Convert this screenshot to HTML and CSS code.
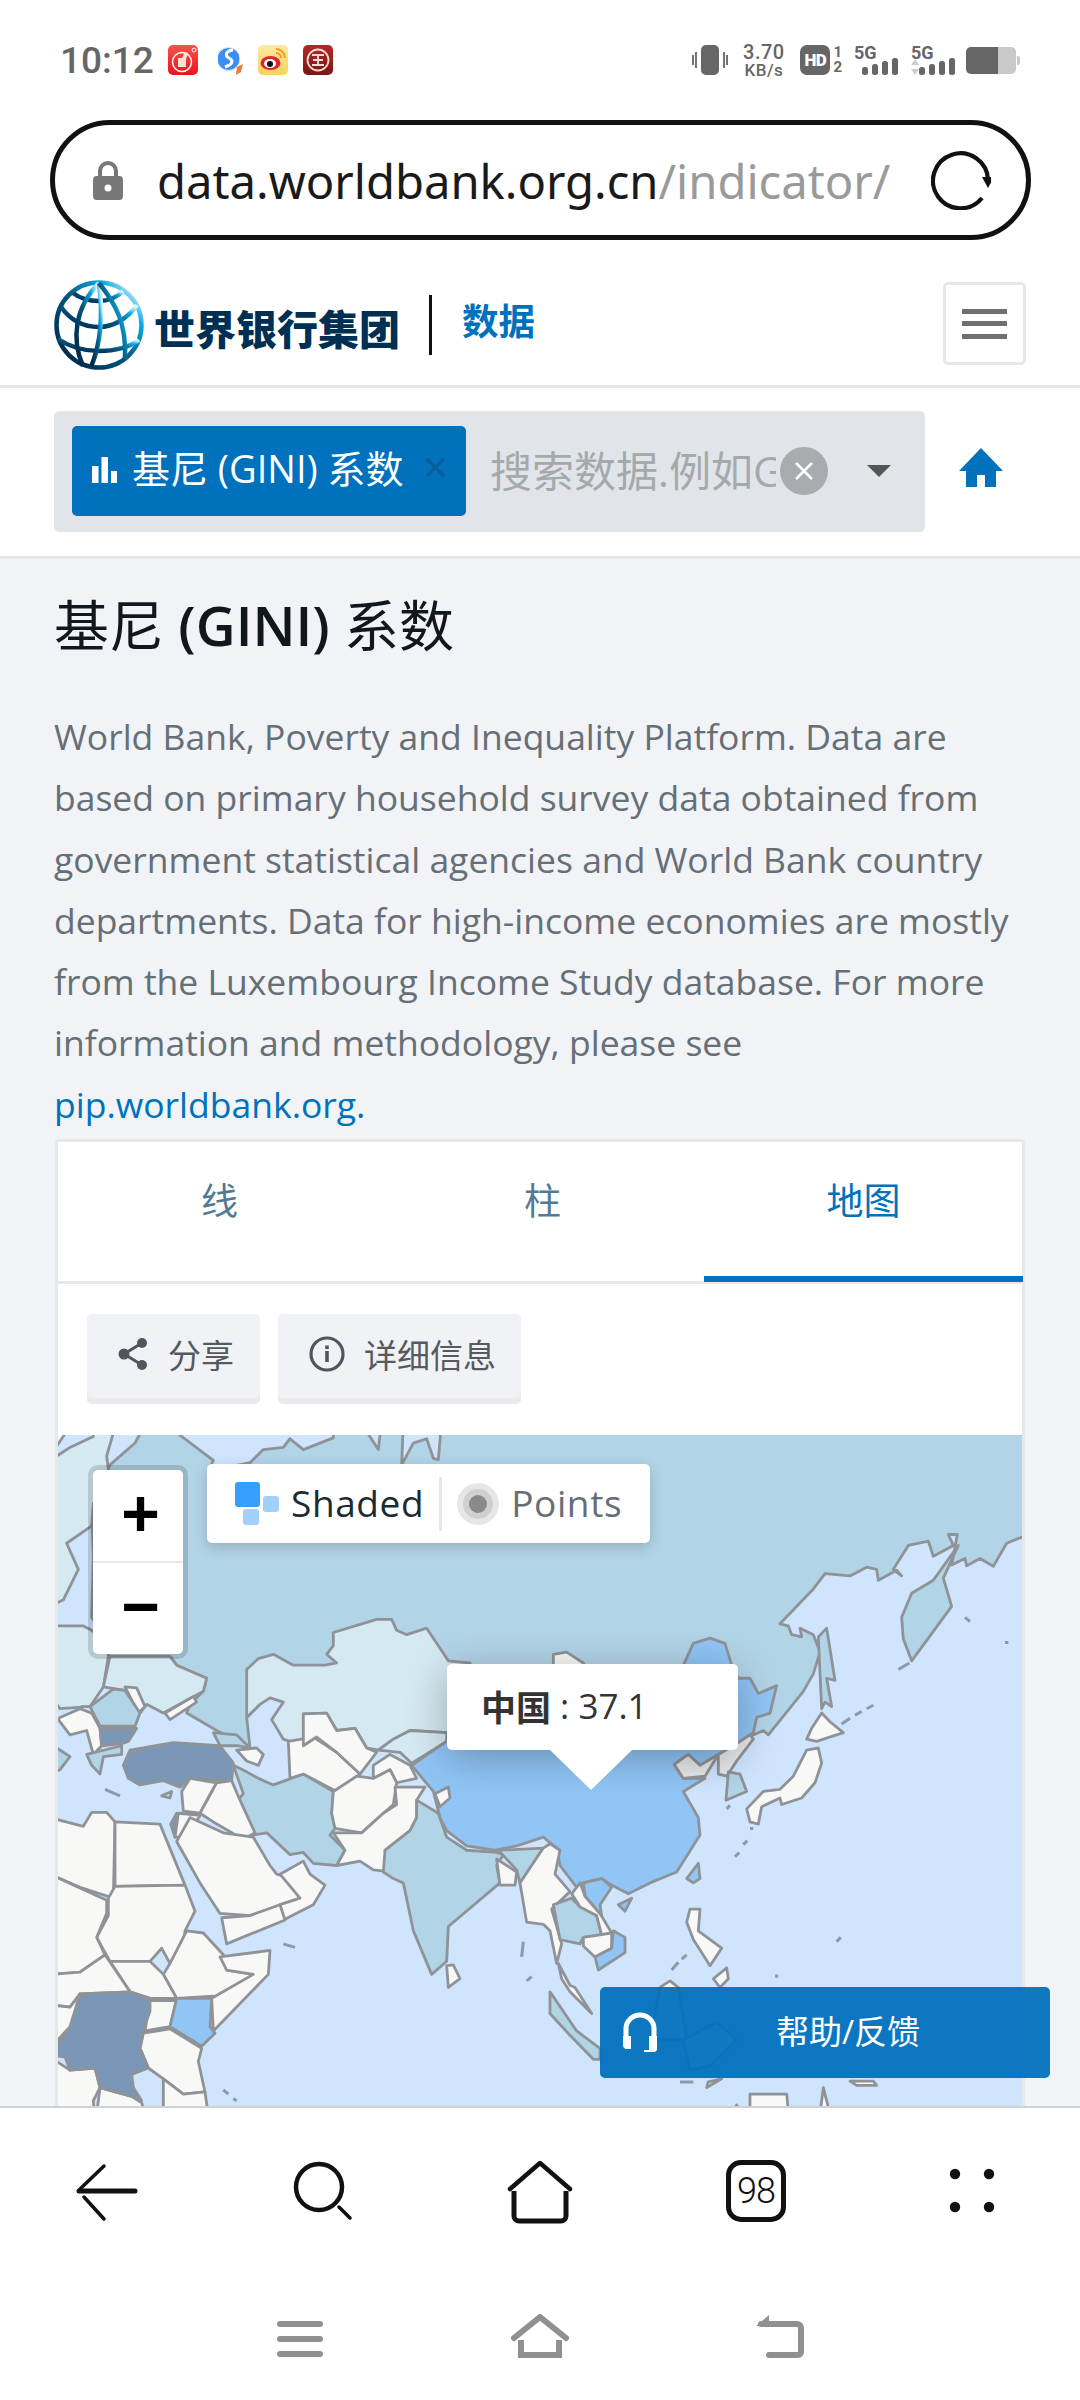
FILE: index.html
```html
<!DOCTYPE html>
<html lang="zh">
<head>
<meta charset="utf-8">
<title>基尼 (GINI) 系数</title>
<link rel="stylesheet" href="styles.css">
</head>
<body>
<div class="phone">
  <header class="status">
    <div class="status-left">
      <span class="time">10:12</span>
      <svg class="app" width="30" height="30" viewBox="0 0 30 30"><defs><linearGradient id="r1" x1="0" y1="0" x2="0" y2="1"><stop offset="0" stop-color="#f4554a"/><stop offset="1" stop-color="#f0101c"/></linearGradient></defs><rect width="30" height="30" rx="5" fill="url(#r1)"/><circle cx="14" cy="17" r="9.5" fill="none" stroke="#fff" stroke-width="1.5"/><path d="M10 13h4l3-6 3 1-2 6v8h-8z" fill="#fbe3d6"/><circle cx="26" cy="5" r="2" fill="none" stroke="#fff"/></svg>
      <svg class="app app-sogou" width="25" height="30" viewBox="0 0 25 30"><circle cx="10.500" cy="14" r="11.500" fill="#3a8ff0" stroke="#e3f0fc"/><path d="M15 5C7 6 7 11 11 13s5 6-4 9" fill="none" stroke="#fff" stroke-width="3"/><path d="M19 22l6-3-2 8-5 3z" fill="#ef7a3a"/></svg>
      <svg class="app" width="30" height="30" viewBox="0 0 30 30"><defs><linearGradient id="r2" x1="0" y1="0" x2="0" y2="1"><stop offset="0" stop-color="#fdeaa6"/><stop offset="1" stop-color="#fbd25c"/></linearGradient></defs><rect width="30" height="30" rx="5" fill="url(#r2)"/><ellipse cx="12.500" cy="18" rx="10" ry="7" fill="#e3262b"/><ellipse cx="12" cy="18.500" rx="6" ry="4.500" fill="#fff"/><circle cx="12" cy="19" r="3" fill="#111"/><path d="M18 4a9 9 0 0 1 9 9M18 8a5 5 0 0 1 5 5" fill="none" stroke="#f39a1c" stroke-width="2"/></svg>
      <svg class="app" width="30" height="30" viewBox="0 0 30 30"><defs><linearGradient id="r3" x1="0" y1="0" x2="0" y2="1"><stop offset="0" stop-color="#b32a26"/><stop offset="1" stop-color="#7d1512"/></linearGradient></defs><rect width="30" height="30" rx="5" fill="url(#r3)"/><circle cx="15" cy="15" r="10.500" fill="none" stroke="#f6dcd8" stroke-width="1.800"/><path d="M9 10h12M15 10v10M9 20h12M10 15h10" stroke="#f6dcd8" stroke-width="1.800" fill="none"/></svg>
    </div>
    <div class="status-right">
      <svg width="36" height="30" viewBox="0 0 36 30"><rect x="9" width="18" height="30" rx="5" fill="#666"/><path d="M1 10v10M4 7v16M32 7v16M35 10v10" stroke="#666" stroke-width="1.800"/></svg>
      <span class="speed"><b>3.70</b><b class="kbs">KB/s</b></span>
      <span class="hd"><span class="hd-box">HD</span><span class="hd-nums"><b>1</b><b>2</b></span></span>
      <span class="signal"><b class="five-g">5G</b><svg width="37" height="17" viewBox="0 0 37 17"><rect y="9" width="6" height="8" rx="2.500" fill="#666"/><rect x="10" y="6" width="6" height="11" rx="2.500" fill="#666"/><rect x="20" y="3" width="6" height="14" rx="2.500" fill="#666"/><rect x="30" width="6" height="17" rx="2.500" fill="#666"/></svg></span>
      <span class="signal"><b class="five-g">5G</b><svg width="37" height="17" viewBox="0 0 37 17"><rect y="9" width="6" height="8" rx="2.500" fill="#666"/><rect x="10" y="6" width="6" height="11" rx="2.500" fill="#666"/><rect x="20" y="3" width="6" height="14" rx="2.500" fill="#666"/><rect x="30" width="6" height="17" rx="2.500" fill="#666"/></svg><svg class="updown" width="8" height="16" viewBox="0 0 8 16"><path d="M4 0l4 6H0zM4 16l4-6H0z" fill="#ccc"/></svg></span>
      <svg class="battery" width="54" height="27" viewBox="0 0 54 27"><path d="M32 0h13a5 5 0 0 1 5 5v17a5 5 0 0 1-5 5H32z" fill="#c9c9c9"/><path d="M51 9h1a2 2 0 0 1 2 2v5a2 2 0 0 1-2 2h-1z" fill="#c9c9c9"/><path d="M5 0h27v27H5a5 5 0 0 1-5-5V5a5 5 0 0 1 5-5z" fill="#666"/></svg>
    </div>
  </header>

  <div class="urlbar">
    <svg class="lock" width="30" height="39" viewBox="0 0 30 39"><path d="M7 17v-7a8 8 0 0 1 16 0v7" fill="none" stroke="#777" stroke-width="4"/><rect y="15" width="30" height="24" rx="4" fill="#777"/><circle cx="15" cy="27" r="3.500" fill="#fff"/></svg>
    <span class="url"><span class="url-host">data.worldbank.org.cn</span><span class="url-path">/indicator/</span></span>
    <svg class="reload" width="60" height="60" viewBox="0 0 60 60"><path d="M51 48A27.500 27.500 0 1 1 57 30" fill="none" stroke="#111" stroke-width="4.200"/><path d="M51 27h12l-6 11z" fill="#111"/></svg>
  </div>

  <div class="site-head">
    <div class="brand">
      <svg class="globe" width="92" height="92" viewBox="0 0 92 92">
        <defs><linearGradient id="gl" x1="0.1" y1="0.9" x2="0.95" y2="0.1"><stop offset="0" stop-color="#002a4e"/><stop offset=".45" stop-color="#03567f"/><stop offset=".8" stop-color="#0aa8e0"/><stop offset="1" stop-color="#d8f2fb"/></linearGradient></defs>
        <g fill="none" stroke="url(#gl)" stroke-width="4.500">
          <circle cx="46" cy="46" r="42.500"/>
          <path d="M8 28c10 14 24 20 38 20s28-8 38-22"/>
          <path d="M5 60c12 8 26 12 41 12s29-3 40-11"/>
          <path d="M20 14c8 6 16 8 26 8s18-4 24-10"/>
          <path d="M46 4C22 28 18 60 30 87"/>
          <path d="M46 4c4 30 2 60-8 84"/>
          <path d="M46 4c16 20 28 40 26 76"/>
        </g>
      </svg>
      <span class="brand-name">世界银行集团</span>
      <span class="brand-sep"></span>
      <span class="brand-data">数据</span>
    </div>
    <button class="burger" type="button"><span></span><span></span><span></span></button>
  </div>

  <div class="search-row">
    <div class="searchbox">
      <div class="chip">
        <svg class="chip-icon" width="25" height="26" viewBox="0 0 25 26"><rect y="9" width="6.500" height="17" fill="#fff"/><rect x="9.500" width="6.500" height="26" fill="#fff"/><rect x="19" y="14" width="6" height="12" fill="#fff"/></svg>
        <span class="chip-text">基尼 (GINI) 系数</span>
        <span class="chip-x">×</span>
      </div>
      <span class="placeholder">搜索数据.例如GDP</span>
      <span class="clear"><svg width="20" height="20" viewBox="0 0 20 20"><path d="M2 2l16 16M18 2L2 18" stroke="#fff" stroke-width="2.500"/></svg></span>
      <span class="caret"></span>
    </div>
    <svg class="home" width="44" height="39" viewBox="0 0 44 39"><path d="M22 0l22 23h-7v16H26V27h-8v12H7V23H0z" fill="#0071bc"/></svg>
  </div>

  <main class="content">
    <h1 class="title">基尼 <span class="title-latin">(GINI)</span> 系数</h1>
    <p class="desc">World Bank, Poverty and Inequality Platform. Data are based on primary household survey data obtained from government statistical agencies and World Bank country departments. Data for high-income economies are mostly from the Luxembourg Income Study database. For more information and methodology, please see <a class="link" href="#">pip.worldbank.org.</a></p>

    <section class="card">
      <nav class="tabs">
        <span class="tab">线</span>
        <span class="tab">柱</span>
        <span class="tab tab-active">地图</span>
      </nav>
      <div class="tools">
        <button class="tool tool-share" type="button"><svg width="30" height="32" viewBox="0 0 30 32"><path d="M24 5L6 16l18 11" fill="none" stroke="#50565b" stroke-width="3"/><circle cx="24" cy="5" r="5" fill="#50565b"/><circle cx="6" cy="16" r="5.500" fill="#50565b"/><circle cx="24" cy="27" r="5" fill="#50565b"/></svg><span>分享</span></button>
        <button class="tool tool-info" type="button"><svg width="36" height="36" viewBox="0 0 36 36"><circle cx="18" cy="18" r="16" fill="none" stroke="#50565b" stroke-width="3.200"/><rect x="16.200" y="15" width="3.600" height="11" fill="#50565b"/><rect x="16.200" y="9.500" width="3.600" height="3.600" fill="#50565b"/></svg><span>详细信息</span></button>
      </div>
      <div class="map">
        <svg class="map-svg" viewBox="58 1435 965 700" preserveAspectRatio="none">
          <g transform="translate(50 1430) scale(.33333 .4355)">
            <polygon class="ru" points="255,30 290,-20 390,-20 390,12 490,70 475,95 600,75 640,45 700,40 720,20 760,45 850,18 850,-20 930,-20 985,45 995,-20 1060,-20 1055,80 1090,30 1130,20 1150,65 1165,68 1175,-20 3000,-20 3000,220 2918,245 2870,260 2830,313 2790,295 2750,312 2745,295 2705,310 2722,240 2695,240 2710,265 2650,290 2635,255 2575,265 2530,320 2555,335 2540,322 2485,345 2480,320 2450,315 2400,335 2325,330 2290,365 2190,445 2215,450 2225,470 2255,475 2250,455 2290,470 2310,510 2290,560 2260,600 2155,700 2140,690 2105,702 1600,700 700,620 590,585 630,630 590,660 600,730 500,690 410,650 420,630 460,600 470,570 380,540 360,520 175,520 175,490 125,430 130,290 125,180 180,80"/>
            <polygon class="lt" points="0,70 60,40 130,15 130,-20 200,-20 170,60 175,90 130,170 125,220 50,260 85,320 40,390 0,405"/>
            <polygon class="wh" points="0,-20 70,-20 0,60"/>
            <polygon class="lt" points="0,450 100,450 125,460 175,490 175,520 160,590 120,635 30,640 0,610"/>
            <polygon class="lt" points="160,590 180,520 360,520 380,540 470,570 460,600 400,625 340,650 290,630 270,650 225,598"/>
            <polygon class="wh" points="345,650 430,612 440,625 360,665"/>
            <polygon class="wh" points="225,590 260,592 285,635 265,650"/>
            <polygon class="ru" points="120,635 190,595 225,598 270,650 255,680 150,680 125,655"/>
            <polygon class="lt" points="95,635 120,635 150,680 115,695 95,665"/>
            <polygon class="wh" points="30,660 90,640 125,650 150,685 155,725 130,745 110,690 60,700 25,665"/>
            <polygon class="dk" points="150,685 260,685 235,715 215,720 155,725"/>
            <polygon class="ru" points="110,745 215,725 215,745 160,750 150,790 125,770"/>
            <polygon class="ru" points="0,720 60,750 30,780 0,790"/>
            <polygon class="dk" points="220,770 240,735 370,718 510,725 550,765 545,805 420,800 390,820 340,805 270,815 235,800"/>
            <polygon class="ru" points="490,695 560,700 600,730 560,725 510,725"/>
            <polygon class="wh" points="560,735 620,730 640,745 625,770 590,760"/>
            <polygon class="lt" points="590,660 590,550 625,525 670,515 730,540 825,540 860,535 830,515 850,495 850,465 980,435 1025,435 1040,460 1070,470 1130,455 1195,530 1260,535 1300,700 1185,695 1080,690 1030,710 985,735 950,730 915,685 860,690 830,650 760,652 760,725 700,710 665,665 700,625 660,615 630,630"/>
            <polygon class="lt" points="985,735 1030,710 1080,690 1190,695 1190,715 1085,765 1050,740"/>
            <polygon class="ru" points="550,770 590,785 625,800 670,815 760,790 850,830 845,880 855,915 840,930 885,965 860,1000 790,995 760,970 720,975 650,925 610,930 565,850 580,835"/>
            <polygon class="wh" points="715,715 790,705 860,740 930,790 860,830 760,790 720,800"/>
            <polygon class="wh" points="760,652 830,650 860,690 915,685 950,730 980,740 930,790 860,740 800,705 760,725"/>
            <polygon class="wh" points="970,770 1020,745 1080,770 1100,800 1040,810 1020,780 970,800"/>
            <polygon class="wh" points="850,830 920,795 970,800 1020,780 1040,810 1030,860 1000,880 935,925 855,915 845,880"/>
            <polygon class="wh" points="850,925 935,925 1000,880 1040,860 1035,820 1125,820 1100,850 1100,890 1080,920 1005,965 1030,1015 970,1010 930,990 860,1000 885,965"/>
            <polygon class="wh" points="395,830 400,875 450,880 500,810 420,800"/>
            <polygon class="wh" points="450,880 500,810 545,805 570,850 615,925 580,940 490,900"/>
            <polygon class="dk" points="362,905 380,880 375,935"/>
            <polygon class="wh" points="385,880 450,885 410,935 375,935"/>
            <polygon class="wh" points="380,945 420,890 520,925 610,935 660,1000 680,1020 745,1035 750,1075 600,1115 510,1110 450,1040"/>
            <polygon class="wh" points="690,1020 760,990 780,1020 825,1045 790,1090 700,1125 690,1090 750,1075"/>
            <polygon class="wh" points="515,1120 600,1115 690,1090 705,1125 530,1180"/>
            <polygon class="wh" points="0,890 100,910 125,878 170,878 195,900 190,1075 90,1050 0,1020"/>
            <polygon class="wh" points="195,900 330,905 405,1045 195,1048"/>
            <polygon class="wh" points="195,1048 405,1045 435,1105 405,1150 400,1185 360,1225 335,1190 300,1220 180,1220 140,1165 175,1115 175,1075"/>
            <polygon class="wh" points="0,1020 170,1080 170,1110 140,1165 165,1205 90,1245 0,1250"/>
            <polygon class="wh" points="360,1225 410,1150 460,1155 520,1205 530,1240 610,1250 500,1305 490,1300 380,1305 340,1250"/>
            <polygon class="wh" points="180,1220 300,1220 340,1250 380,1305 300,1305 240,1290"/>
            <polygon class="wh" points="510,1210 660,1195 655,1250 490,1380 485,1305 610,1250 530,1240"/>
            <polygon class="wh" points="0,1250 90,1245 165,1205 240,1290 90,1295 60,1325 0,1320"/>
            <polygon class="wh" points="0,1440 60,1470 135,1465 150,1510 130,1540 135,1600 0,1600"/>
            <polygon class="wh" points="150,1510 245,1530 275,1545 300,1600 135,1600"/>
            <polygon class="wh" points="280,1385 360,1375 455,1420 445,1450 465,1520 400,1525 340,1490 295,1465 270,1420"/>
            <polygon class="wh" points="340,1490 400,1525 465,1520 480,1600 340,1600"/>
            <polygon class="wh" points="300,1310 380,1310 360,1370 285,1380"/>
            <polygon class="md" points="380,1305 485,1305 480,1370 495,1385 455,1415 360,1370"/>
            <polygon class="dk" points="90,1295 240,1290 300,1305 300,1335 285,1365 270,1420 295,1465 245,1480 250,1510 275,1540 245,1530 150,1510 135,1465 60,1470 45,1440 0,1435 60,1370"/>
            <polygon class="wh" points="0,1320 60,1325 90,1295 60,1370 0,1420"/>
            <polygon class="ru" points="1100,850 1165,880 1190,935 1250,965 1340,970 1360,975 1340,1000 1350,1040 1195,1140 1190,1220 1145,1250 1090,1150 1060,1040 1030,1030 1000,1015 1005,965 1080,920 1100,890"/>
            <polygon class="wh" points="1190,1230 1210,1228 1230,1260 1195,1280"/>
            <polygon class="wh" points="1340,985 1400,1015 1395,1045 1350,1045"/>
            <polygon class="ru" points="1345,965 1480,960 1410,1040 1400,1010"/>
            <polygon class="wh" points="1510,540 1510,515 1550,510 1600,535 1620,560"/>
            <polygon class="md" points="1085,770 1190,715 1500,640 1900,540 1930,490 1980,478 2025,490 2045,540 2065,570 2100,570 2125,605 2180,587 2160,650 2120,660 2110,695 2060,720 2005,745 1950,770 1915,745 1873,768 1900,800 1965,800 1900,830 1945,890 1950,930 1880,1015 1800,1040 1735,1065 1685,1045 1655,1030 1600,1040 1580,1050 1530,1000 1520,960 1480,935 1400,955 1335,965 1250,955 1190,920 1170,890 1150,830"/>
            <polygon class="wh" points="1155,835 1195,820 1200,845 1170,865"/>
            <polygon class="gr" points="1873,768 1915,745 1950,770 2005,745 1965,795 1900,800"/>
            <polygon class="gr" points="2005,745 2060,720 2100,700 2110,710 2060,760 2030,795 2005,790"/>
            <polygon class="ru" points="2035,785 2070,790 2090,830 2028,850"/>
            <polygon class="wh" points="1410,1040 1480,960 1500,950 1530,965 1515,1020 1560,1060 1505,1100 1535,1180 1520,1225 1500,1150 1480,1135 1430,1130"/>
            <polygon class="ru" points="1510,1090 1565,1075 1590,1095 1640,1115 1655,1160 1600,1165 1590,1180 1530,1170 1520,1130"/>
            <polygon class="wh" points="1565,1065 1590,1040 1605,1070 1650,1110 1685,1155 1655,1160 1640,1115 1590,1095"/>
            <polygon class="md" points="1600,1040 1655,1030 1685,1050 1650,1090 1655,1115 1605,1070"/>
            <polygon class="wh" points="1600,1165 1685,1155 1685,1190 1635,1210 1600,1185"/>
            <polygon class="md" points="1690,1150 1725,1165 1725,1200 1645,1240 1635,1210 1685,1190"/>
            <polygon class="md" points="1705,1090 1745,1075 1725,1105"/>
            <polygon class="md" points="1910,1030 1945,995 1950,1030 1930,1040"/>
            <polygon class="wh" points="1525,1225 1560,1275 1575,1280 1625,1340 1560,1290 1535,1260"/>
            <polygon class="ru" points="1500,1290 1580,1380 1650,1420 1650,1445 1630,1445 1560,1390 1500,1340"/>
            <polygon class="wh" points="2090,870 2140,830 2190,825 2230,795 2270,735 2305,730 2315,765 2295,810 2255,845 2195,860 2190,845 2135,865 2125,905 2100,900"/>
            <polygon class="wh" points="2270,710 2285,685 2315,650 2340,670 2380,695 2300,715"/>
            <polygon class="ru" points="2305,475 2330,455 2355,575 2330,570 2345,635 2325,625 2315,640"/>
            <polygon class="ru" points="2555,430 2585,375 2650,345 2725,265 2680,340 2705,405 2585,530 2560,480"/>
            <polygon class="wh" points="1910,1130 1920,1100 1950,1100 1945,1150 2015,1190 1980,1230 1955,1200 1930,1170"/>
            <polygon class="wh" points="1990,1260 2030,1235 2035,1260 2010,1280"/>
            <polygon class="wh" points="1830,1280 1860,1265 1885,1280 1910,1400 1800,1400"/>
            <polygon class="wh" points="1900,1400 2000,1360 2060,1400 1980,1460 1920,1470"/>
            <polygon class="wh" points="2100,1558 2100,1525 2210,1525 2220,1600 2080,1600"/>
            <polygon class="wh" points="2305,1600 2320,1510 2350,1600"/>
            <polygon class="wh" points="2020,1600 2060,1550 2100,1600"/>
            <polygon class="ru" points="1970,1510 1975,1497 2015,1490"/>
            <polygon class="wh" points="2400,1495 2470,1495 2480,1505 2420,1505"/>
            <path class="dash" d="M2375,675L2400,662M2415,655L2435,646M2450,640L2470,632M2545,550L2578,535M2030,870L2040,862M2100,915L2110,915M2055,980L2068,970M2080,952L2092,943M1865,1240L1885,1222M1895,1215L1910,1205M2360,1175L2372,1165M2180,1250L2180,1258M2745,430L2760,440M2865,488L2875,488M520,1515L535,1525M550,1535L560,1540M700,1180L735,1188M165,825L210,840M1420,1175L1415,1210M1430,1265L1445,1255M1890,1497L1930,1497"/>
            <polygon class="sm" points="335,840 365,830 360,845"/>
          </g>
        </svg>

        <div class="zoom-ctl">
          <span class="zoom-btn zoom-plus">+</span>
          <span class="zoom-btn zoom-minus">−</span>
        </div>

        <div class="legend">
          <span class="legend-item">
            <svg width="44" height="44" viewBox="0 0 44 44"><rect width="25" height="25" rx="3" fill="#369ffb"/><rect x="28" y="14" width="16" height="16" rx="3" fill="#a1d0fb"/><rect x="8" y="27" width="16" height="16" rx="3" fill="#a1d0fb"/></svg>
            <span class="legend-on">Shaded</span>
          </span>
          <span class="legend-sep"></span>
          <span class="legend-item">
            <svg width="42" height="42" viewBox="0 0 42 42"><circle cx="21" cy="21" r="21" fill="#e6e6e6"/><circle cx="21" cy="21" r="15" fill="#d0d0d0"/><circle cx="21" cy="21" r="9" fill="#8a8a8a"/></svg>
            <span class="legend-off">Points</span>
          </span>
        </div>

        <div class="tip"><b>中国</b><span> : 37.1</span></div>
      </div>
    </section>
  </main>

  <a class="help" href="#">
    <svg width="34" height="42" viewBox="0 0 34 42"><path d="M3 26v-9a14 14 0 0 1 28 0v9" fill="none" stroke="#fff" stroke-width="5"/><path d="M0 24h8v13H4a4 4 0 0 1-4-4zM26 24h8v14l-2 2h-11v-2h10V38h-5z" fill="#fff"/></svg>
    <span>帮助/反馈</span>
  </a>

  <footer class="bottom">
    <div class="browser-nav">
      <svg width="64" height="64" viewBox="0 0 64 64"><path d="M3 31h56" stroke="#111" stroke-width="5" stroke-linecap="round"/><path d="M4 29L28 6M8 37l20 22" stroke="#111" stroke-width="3.500" stroke-linecap="round" fill="none"/></svg>
      <svg width="64" height="64" viewBox="0 0 64 64"><circle cx="27" cy="27" r="23" fill="none" stroke="#111" stroke-width="4.500"/><path d="M47 47l11 11" stroke="#111" stroke-width="3.500" stroke-linecap="round"/></svg>
      <svg width="66" height="64" viewBox="0 0 66 64"><path d="M3 29L33 3l30 26" fill="none" stroke="#111" stroke-width="4.500" stroke-linecap="round" stroke-linejoin="round"/><path d="M7 31v25a5 5 0 0 0 5 5h42a5 5 0 0 0 5-5V31" fill="none" stroke="#111" stroke-width="5"/></svg>
      <span class="tab-count">98</span>
      <svg width="64" height="64" viewBox="0 0 64 64"><circle cx="15" cy="14" r="5.200" fill="#111"/><circle cx="49" cy="14" r="5.200" fill="#111"/><circle cx="15" cy="47" r="5.200" fill="#111"/><circle cx="49" cy="47" r="5.200" fill="#111"/></svg>
    </div>
    <div class="system-nav">
      <svg width="46" height="44" viewBox="0 0 46 44"><path d="M3 10h40M3 25h40M3 40h40" stroke="#909090" stroke-width="6" stroke-linecap="round"/></svg>
      <svg width="58" height="44" viewBox="0 0 58 44"><path d="M3 24L29 3l26 21" fill="none" stroke="#909090" stroke-width="6" stroke-linecap="round" stroke-linejoin="round"/><path d="M10 26v15h38V26" fill="none" stroke="#909090" stroke-width="6"/></svg>
      <svg width="50" height="44" viewBox="0 0 50 44"><path d="M6 10h36a4 4 0 0 1 4 4v24a3 3 0 0 1-3 3H14" fill="none" stroke="#909090" stroke-width="6" stroke-linecap="round"/><path d="M14 1L1 12h13z" fill="#909090"/></svg>
    </div>
  </footer>
</div>
</body>
</html>
```
FILE: styles.css
```css
* { box-sizing: border-box; }
html, body { margin: 0; padding: 0; }
body { width: 1080px; height: 2400px; overflow: hidden; background: #fff; font-family: "Open Sans", "Noto Sans CJK SC", sans-serif; }
.phone { position: relative; width: 1080px; height: 2400px; display: flex; flex-direction: column; background: #fff; overflow: hidden; }
svg { display: block; flex: none; }
b { font-weight: 700; }

/* status bar */
.status { height: 120px; flex: none; display: flex; justify-content: space-between; align-items: center; padding: 0 60px; }
.status-left { display: flex; align-items: center; }
.time { font: 500 37px/1 Roboto, sans-serif; color: #666; width: 108px; }
.app { margin-right: 15px; }
.app-sogou { margin-left: 5px; }
.status-right { display: flex; align-items: center; color: #666; }
.speed { display: flex; flex-direction: column; align-items: center; margin: 0 14px 0 13px; width: 45px; font-family: Roboto, sans-serif; line-height: 1; }
.speed b { font-size: 20px; font-weight: 500; letter-spacing: .5px; }
.speed .kbs { font-size: 17px; }
.hd { display: flex; align-items: center; margin-right: 12px; }
.hd-box { width: 30px; height: 30px; border-radius: 7px; background: #666; color: #fff; font: 900 17px/30px Roboto, sans-serif; text-align: center; letter-spacing: -.5px; }
.hd-nums { display: flex; flex-direction: column; margin-left: 3px; font: 700 15px/15px Roboto, sans-serif; }
.signal { position: relative; display: block; width: 45px; height: 30px; margin-right: 12px; }
.five-g { position: absolute; left: 0; top: 0; font: 700 18px/16px Roboto, sans-serif; }
.signal svg { position: absolute; right: 0; bottom: 0; }
.signal .updown { left: 0; right: auto; }
.battery { margin-left: -2px; }

/* url bar */
.urlbar { height: 120px; flex: none; margin: 0 49px 0 50px; border: 5px solid #111; border-radius: 60px; display: flex; align-items: center; padding-left: 38px; }
.lock { margin-right: 34px; }
.url { width: 733px; white-space: nowrap; font: 400 47.200px/70px "Noto Sans", sans-serif; margin-top: 2px; }
.url-host { color: #1a1a1a; }
.url-path { color: #9a9a9a; }
.reload { margin-left: 41px; }

/* site header */
.site-head { height: 148px; flex: none; display: flex; align-items: center; justify-content: space-between; padding: 24px 54px 0 53px; border-bottom: 3px solid #e5e8eb; }
.brand { display: flex; align-items: center; }
.brand-name { margin-left: 9px; font: 900 41px/1 "Noto Sans CJK SC", sans-serif; color: #002f54; padding-top: 6px; }
.brand-sep { width: 3px; height: 60px; margin: 0 30px 0 29px; background: #111; }
.brand-data { font: 700 36.500px/1 "Noto Sans CJK SC", sans-serif; color: #0071bc; margin-top: -8px; }
.burger { width: 83px; height: 83px; padding: 0; background: #fff; border: 3px solid #e5e8eb; border-radius: 5px; display: flex; flex-direction: column; align-items: center; justify-content: center; gap: 7.500px; margin-top: -2px; }
.burger span { width: 45px; height: 5px; background: #707070; }

/* search row */
.search-row { height: 171px; flex: none; display: flex; align-items: center; padding-left: 54px; border-bottom: 3px solid #e5e8eb; }
.searchbox { width: 871px; height: 121px; background: #e1e5ea; border-radius: 5px; display: flex; align-items: center; padding: 0 0 0 18px; margin: -2px 34px 0 0; }
.chip { width: 394px; height: 90px; background: #0071bc; border-radius: 5px; display: flex; align-items: center; padding-left: 20px; flex: none; position: relative; }
.chip-icon { margin-right: 15px; margin-top: -3px; }
.chip-text { font-size: 38px; line-height: 50px; color: #fff; white-space: nowrap; margin-top: -7px; }
.chip-x { position: absolute; left: 351px; top: 15px; font-size: 44px; line-height: 50px; color: #0b5c98; }
.placeholder { width: 286px; margin: -6px 0 0 24px; overflow: hidden; white-space: nowrap; font-size: 42px; color: #a6a9ac; flex: none; }
.clear { width: 48px; height: 48px; flex: none; margin-left: 4px; border-radius: 50%; background: #a9abae; display: flex; align-items: center; justify-content: center; }
.caret { margin-left: 39px; width: 0; height: 0; border: 12px solid transparent; border-top-color: #555; border-bottom: 0; }
.home { margin-top: -10px; }

/* content */
.content { flex: 1; min-height: 0; overflow: hidden; background: #f1f3f7; padding: 0 55px; }
.title { margin: 31px 0 46px -1px; font-weight: 400; font-size: 55px; line-height: 70px; color: #11171c; }
.title-latin { font-weight: 600; }
.desc { margin: 0 0 0 -1px; font-size: 35.500px; line-height: 61.300px; color: #666f76; white-space: normal; width: 975px; }
.link { color: #0071bc; text-decoration: none; }
.card { margin-top: 4px; width: 970px; background: #fff; border: 3px solid #e5e8eb; border-bottom: 0; border-radius: 4px 4px 0 0; }
.tabs { height: 142px; display: flex; border-bottom: 3px solid #e6e8eb; }
.tab { width: 323px; flex: none; height: 140px; padding-top: 34px; border-bottom: 6px solid transparent; text-align: center; font-size: 37px; line-height: 50px; color: #527a93; }
.tab-active { width: 319px; color: #0071bc; border-bottom-color: #0071bc; }
.tools { height: 151px; display: flex; gap: 18px; padding: 30px 0 0 29px; }
.tool { height: 90px; padding: 0 0 10px 31px; display: flex; align-items: center; background: #f1f2f5; border: 0; border-radius: 5px; box-shadow: inset 0 -6px 0 #e9eaed; font-family: inherit; font-size: 33px; color: #555a5f; }
.tool-share { width: 173px; gap: 20px; }
.tool-info { width: 243px; gap: 19px; }

/* map */
.map { position: relative; height: 700px; overflow: hidden; background: #cfe4fd; }
.map-svg { position: absolute; left: 0; top: 0; width: 965px; height: 700px; }
.map-svg polygon { vector-effect: non-scaling-stroke; stroke: #8f9397; stroke-width: 2.800; stroke-linejoin: round; }
.ru { fill: #b2d4e7; }
.lt { fill: #d5e9f2; }
.wh { fill: #f8f8f7; }
.gr { fill: #e6e8ea; }
.dk { fill: #7b97b8; }
.md { fill: #90c5f6; }
.sm { fill: #cfe4fd; }
.dash { fill: none; stroke: #8b9aa8; stroke-width: 3; vector-effect: non-scaling-stroke; }
.zoom-ctl { position: absolute; left: 35px; top: 35px; width: 90px; height: 184px; display: flex; flex-direction: column; background: #fff; border-radius: 5px; box-shadow: 0 0 0 5px rgba(0,0,0,.14); }
.zoom-btn { flex: 1; display: flex; align-items: center; justify-content: center; font: 700 66px/1 "Liberation Sans", sans-serif; color: #000; padding: 0 0 6px 5px; }
.zoom-plus { border-bottom: 2px solid #e5e8eb; }
.legend { position: absolute; left: 149px; top: 29px; width: 443px; height: 79px; display: flex; align-items: center; padding-left: 28px; background: #fff; border-radius: 5px; box-shadow: 0 4px 14px rgba(0,0,0,.18); font-size: 37px; }
.legend-item { display: flex; align-items: center; gap: 12px; }
.legend-on { color: #1c2a33; letter-spacing: .6px; margin-top: -3px; }
.legend-off { color: #666e74; letter-spacing: .6px; margin-top: -3px; }
.legend-sep { width: 3px; height: 54px; margin: 0 15px; background: #e6e8ea; }
.tip { position: absolute; left: 389px; top: 229px; width: 291px; height: 86px; display: flex; align-items: center; padding: 0 0 4px 34px; background: #fff; border-radius: 5px; box-shadow: 0 8px 40px rgba(0,0,0,.28); font-size: 35px; color: #333; white-space: pre; }
.tip::after { content: ""; position: absolute; left: 103px; top: 86px; width: 0; height: 0; border-style: solid; border-width: 40px 41px 0; border-color: #fff transparent transparent; }

/* help */
.help { position: absolute; left: 600px; top: 1987px; width: 450px; height: 91px; display: flex; align-items: center; padding-left: 23px; background: rgba(0,112,188,.94); border-radius: 5px; text-decoration: none; color: #fff; font-size: 33px; }
.help span { margin: -6px 0 0 119px; }

/* bottom */
.bottom { flex: none; height: 294px; background: #fff; border-top: 2px solid #cfd2d5; padding-top: 52px; }
.browser-nav { display: grid; grid-template-columns: repeat(5, 216px); justify-items: center; }
.tab-count { width: 60px; height: 62px; border: 5px solid #111; border-radius: 15px; display: flex; align-items: center; justify-content: center; font: 300 36px/1 Roboto, sans-serif; color: #111; letter-spacing: -1px; }
.system-nav { display: grid; grid-template-columns: repeat(3, 240px); justify-items: center; padding: 0 180px; margin-top: 90px; }
```
